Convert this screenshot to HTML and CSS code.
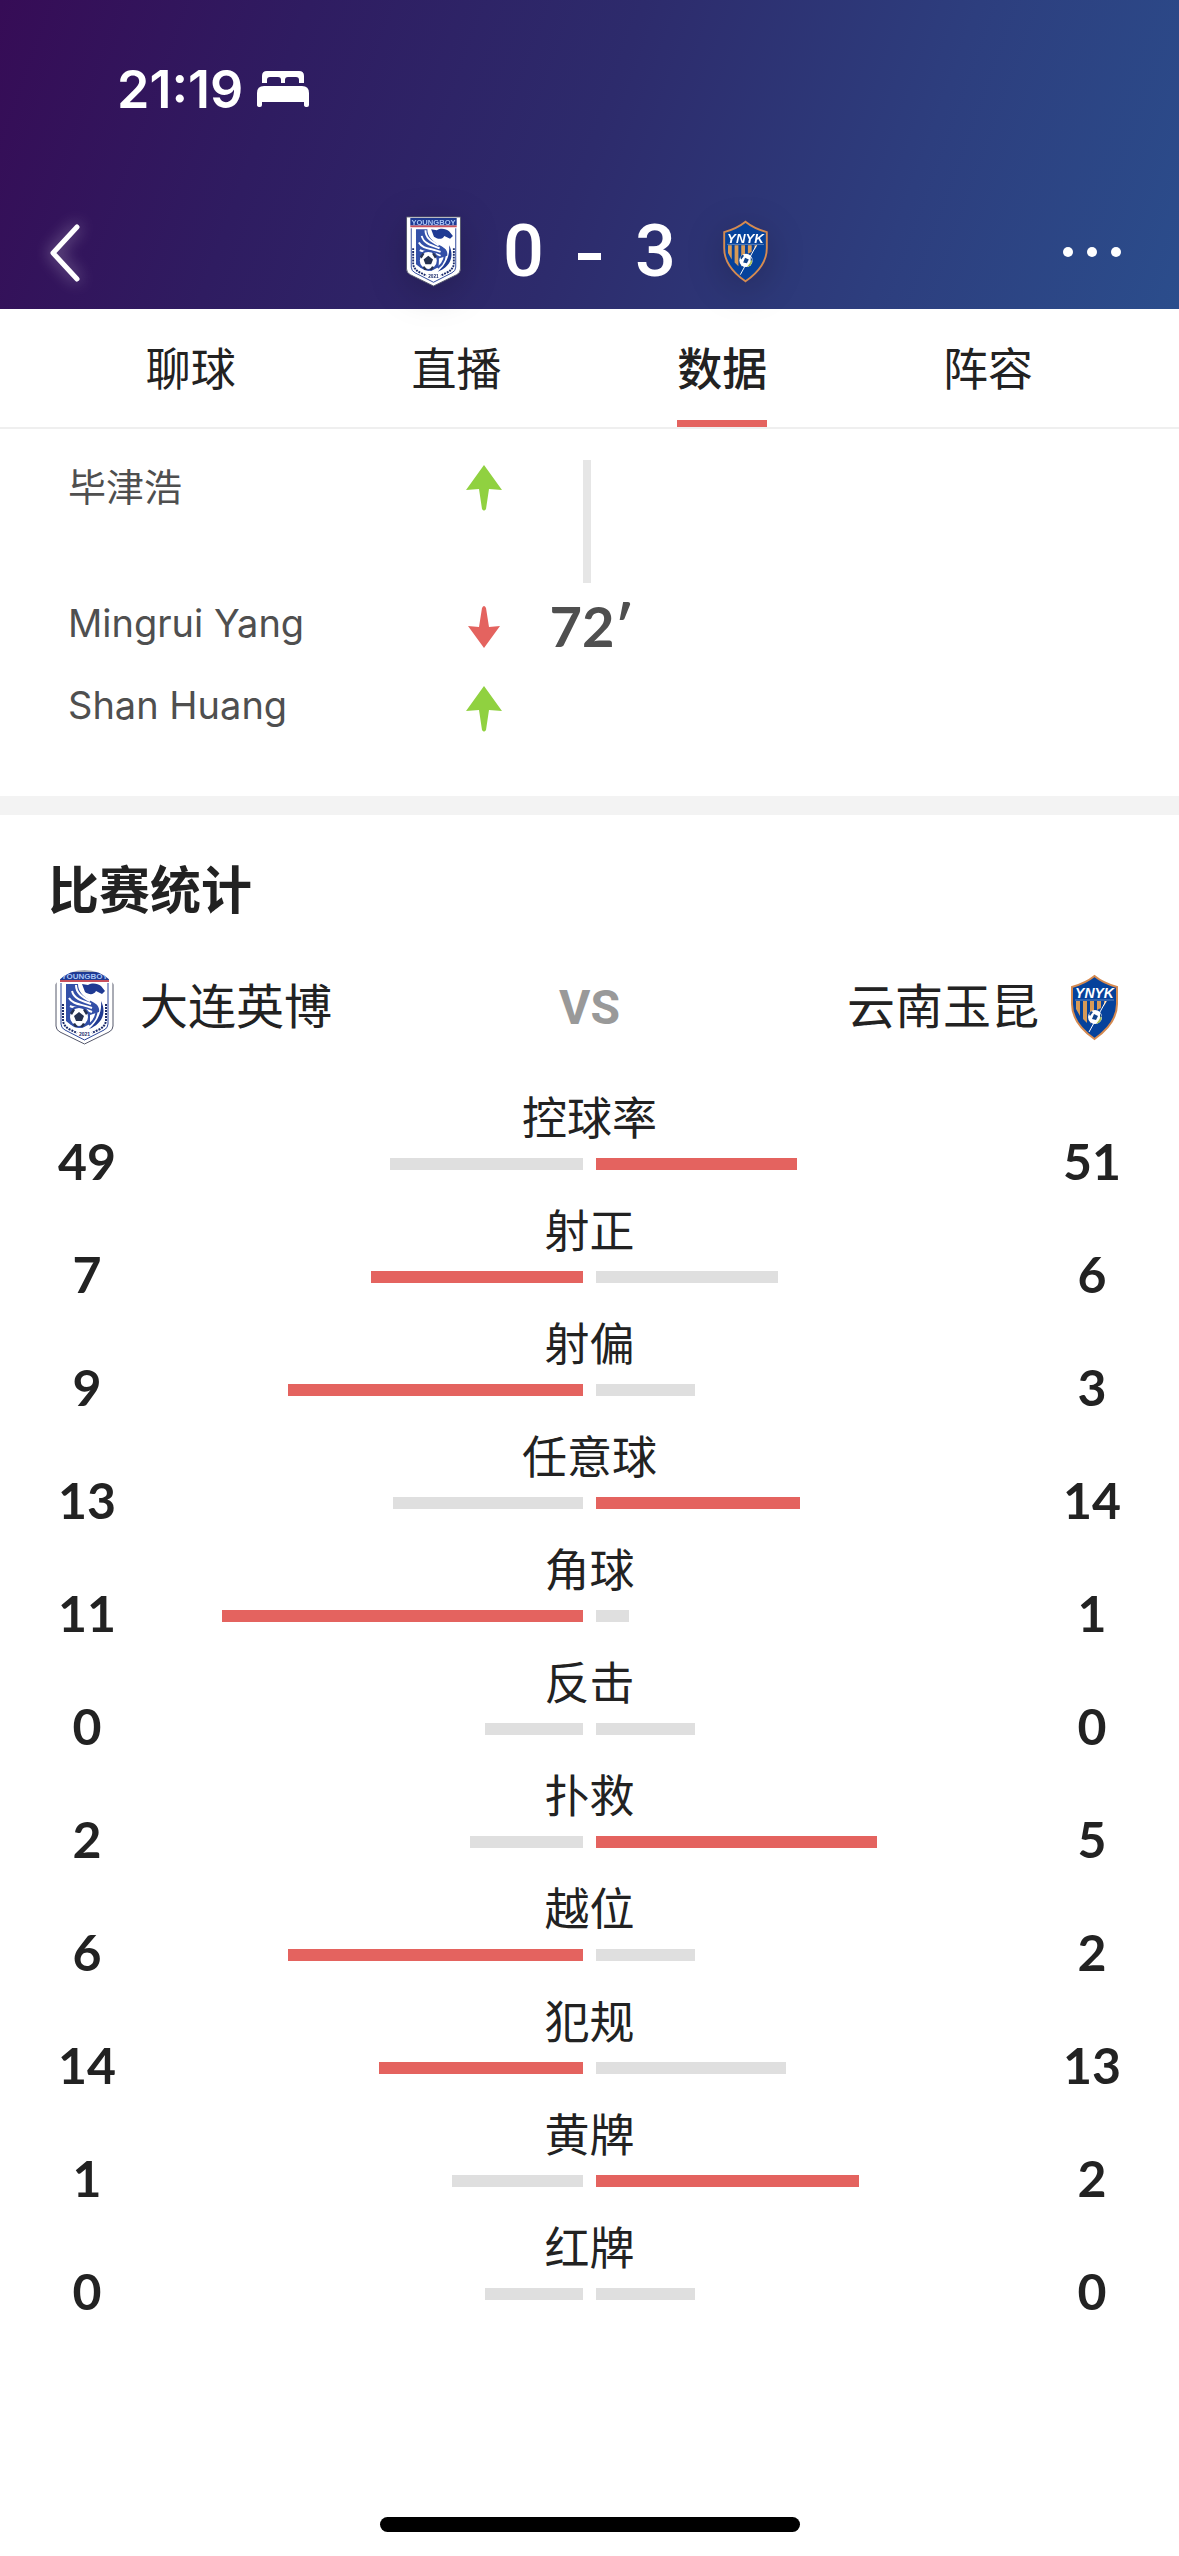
FILE: index.html
```html
<!DOCTYPE html>
<html lang="zh-CN">
<head>
  <meta charset="UTF-8">
  <meta name="viewport" content="width=device-width, initial-scale=1.0">
  <title>大连英博 0 - 3 云南玉昆</title>
  <link rel="stylesheet" href="styles.css">
</head>
<body>
  <!-- escudos e iconos compartidos -->
  <svg class="sprite" aria-hidden="true">
    <symbol id="crest-home" viewBox="0 0 75 75">
      <path d="M9 1H66V56Q66 60 62 62L37.500 74L13 62Q9 60 9 56Z" fill="#fff" stroke="#55586b" stroke-width="1"/>
      <path d="M13 2H62V10H13Z" fill="#1f3a93"/>
      <path d="M13 11H62" stroke="#c8505c" stroke-width="2"/>
      <text x="37.500" y="9" class="crest-home-text">YOUNGBOY</text>
      <path d="M14 13V54Q14 58 18 60L37.500 70L57 60Q61 58 61 54V13" fill="none" stroke="#2a4599" stroke-width="1"/>
      <path d="M19 14H31C31 22 37 27 44 31C50 34 53 37 52 42L43 45L43 54L35 58L24 55L19 51Z" fill="#3350a8"/>
      <path d="M35 14L41 15C46 12 51 14 54 16L58 21L55 24L49 21C47 25 42 25 38 22Z" fill="#1f3a93"/>
      <path d="M29 15C29 23 35 27 43 31M25 21C27 29 35 31 44 34M22 28C26 35 35 34 45 38M23 36C29 39 37 38 45 42" fill="none" stroke="#fff" stroke-width="2"/>
      <path d="M54 31C60 43 55 54 42 59C51 51 55 42 54 31Z" fill="#1f3a93"/>
      <path d="M49 35C51 44 47 51 42 55" fill="none" stroke="#3350a8" stroke-width="2"/>
      <circle cx="32" cy="47" r="10" fill="#fff" stroke="#3350a8" stroke-width="2"/>
      <path d="M32 42L37 46L35 51H29L27 46ZM23 43L26 39L28 40L25 45ZM41 43L38 39L36 40L39 45ZM26 54L28 53L31 57H28ZM38 54L36 53L33 57H36Z" fill="#25314f"/>
      <path d="M16 34V51Q17 57 24 60L30 63M59 34V51Q58 57 51 60L45 63" fill="none" stroke="#1c2c6c" stroke-width="2" stroke-dasharray="2 1"/>
      <text x="37.500" y="66" class="crest-home-year">2021</text>
    </symbol>
    <symbol id="crest-away" viewBox="0 0 75 75">
      <path d="M37.500 6Q46 13 60 17V34C60 50 49 61 37.500 69C26 61 15 50 15 34V17Q29 13 37.500 6Z" fill="#06429b" stroke="#d58a50" stroke-width="2"/>
      <path d="M19 31H23V46L19 39ZM26 31H30V53L26 49ZM33 31H37V43L33 54ZM40 31H44V38L40 40ZM47 31H50L47 36Z" fill="#d79a57"/>
      <path d="M18 30H57" stroke="#5b82bf" stroke-width="1"/>
      <path d="M49 31L32 62" stroke="#fff" stroke-width="1"/>
      <circle cx="38" cy="47" r="7" fill="#fff"/>
      <path d="M37 44L41 46L39 50L35 49ZM32 44L34 41L36 42L33 46ZM43 43L45 47L43 48Z" fill="#12438a"/>
      <path d="M44 46Q46 52 39 54L42 50Z" fill="#a8bf4e"/>
      <text x="37.500" y="28" class="crest-away-text">YNYK</text>
    </symbol>
    <symbol id="arrow-up" viewBox="0 0 36 46">
      <path d="M18 0L36 25L23 24L20 44Q18 47 16 44L13 24L0 25Z" fill="#90d140"/>
    </symbol>
    <symbol id="arrow-down" viewBox="0 0 36 46">
      <path d="M18 44L34 22L23 23L20 4Q18 0 16 4L13 23L2 22Z" fill="#e4635f"/>
    </symbol>
  </svg>

  <header class="header">
    <div class="status-bar">
      <span>21:19</span>
      <svg class="bed" viewBox="0 0 52 36" aria-hidden="true">
        <path d="M5 12V5Q5 0 10 0H42Q47 0 47 5V12H42V9Q42 6 39 6H31Q28 6 28 9V12H24V9Q24 6 21 6H13Q10 6 10 9V12Z" fill="#fff"/>
        <path d="M0 34V22Q0 15 7 15H45Q52 15 52 22V34Q52 36 50 36Q47 36 47 34V31H5V34Q5 36 3 36Q0 36 0 34Z" fill="#fff"/>
      </svg>
    </div>
    <div class="top-bar">
      <button class="icon-btn back" aria-label="返回">
        <svg viewBox="0 0 32 58"><path d="M29 4L5 30L29 56" fill="none" stroke="#fff" stroke-width="5" stroke-linecap="round" stroke-linejoin="round"/></svg>
      </button>
      <div class="score">
        <svg class="crest shadow"><use href="#crest-home"/></svg>
        <div class="score-text"><span>0</span><span class="dash"></span><span>3</span></div>
        <svg class="crest shadow"><use href="#crest-away"/></svg>
      </div>
      <button class="icon-btn more" aria-label="更多">
        <svg viewBox="0 0 58 10"><circle cx="5" cy="5" r="5" fill="#fff"/><circle cx="29" cy="5" r="5" fill="#fff"/><circle cx="53" cy="5" r="5" fill="#fff"/></svg>
      </button>
    </div>
  </header>

  <nav class="tabs">
    <a href="#chat">聊球</a>
    <a href="#live">直播</a>
    <a href="#stats" class="active">数据</a>
    <a href="#lineup">阵容</a>
  </nav>

  <section class="events">
    <div class="event first">
      <div class="players">
        <div class="player"><span>毕津浩</span><svg class="arrow"><use href="#arrow-up"/></svg></div>
      </div>
      <div class="line"></div>
    </div>
    <div class="event">
      <div class="players">
        <div class="player"><span>Mingrui Yang</span><svg class="arrow"><use href="#arrow-down"/></svg></div>
        <div class="player"><span>Shan Huang</span><svg class="arrow"><use href="#arrow-up"/></svg></div>
      </div>
      <div class="minute">72′</div>
    </div>
  </section>

  <main class="stats" id="stats">
    <h1>比赛统计</h1>
    <div class="teams">
      <div class="team"><svg class="crest round"><use href="#crest-home"/></svg><span>大连英博</span></div>
      <span class="vs">VS</span>
      <div class="team away"><span>云南玉昆</span><svg class="crest round"><use href="#crest-away"/></svg></div>
    </div>
    <div class="rows" id="rows"></div>
  </main>

  <div class="home-indicator"></div>

  <script>
    const stats = [
      ['控球率', 49, 51],
      ['射正', 7, 6],
      ['射偏', 9, 3],
      ['任意球', 13, 14],
      ['角球', 11, 1],
      ['反击', 0, 0],
      ['扑救', 2, 5],
      ['越位', 6, 2],
      ['犯规', 14, 13],
      ['黄牌', 1, 2],
      ['红牌', 0, 0]
    ];

    function bar(value, other) {
      const total = value + other;
      // sin datos se muestra un cuarto de la barra
      const width = total ? value / total * 100 : 25;
      return `<div class="side"><div class="bar ${value > other ? 'win' : ''}" style="width: ${width}%"></div></div>`;
    }

    document.getElementById('rows').innerHTML = stats.map(([name, home, away]) => `
      <div class="row">
        <span class="num">${home}</span>
        <div class="middle">
          <span class="name">${name}</span>
          <div class="bars">${bar(home, away)}${bar(away, home)}</div>
        </div>
        <span class="num">${away}</span>
      </div>`).join('');
  </script>
</body>
</html>
```
FILE: styles.css
```css
* {
  box-sizing: border-box;
}
body {
  font-family: Inter, "Noto Sans CJK SC", sans-serif;
  margin: 0;
  background: #fff;
  color: #222;
  min-height: 100vh;
  display: flex;
  flex-direction: column;
}
.sprite {
  display: none;
}
.crest-home-text {
  font: bold 8px "Liberation Sans", sans-serif;
  fill: #a9c5f5;
  text-anchor: middle;
}
.crest-home-year {
  font: bold 5px "Liberation Sans", sans-serif;
  fill: #1c2c6c;
  text-anchor: middle;
}
.crest-away-text {
  font: italic bold 14px "Liberation Sans", sans-serif;
  fill: #fff;
  text-anchor: middle;
}
.header {
  background: linear-gradient(110deg, #360c56 0%, #2f1c61 24%, #2d2b6c 50%, #2d3e7e 76%, #2b4d8c 100%);
  color: #fff;
  padding-top: 56px;
}
.status-bar {
  display: flex;
  align-items: center;
  gap: 14px;
  height: 66px;
  padding-left: 117px;
  font-size: 52px;
  font-weight: 600;
}
.bed {
  width: 52px;
  height: 36px;
}
.top-bar {
  display: grid;
  grid-template-columns: 1fr auto 1fr;
  align-items: center;
  height: 187px;
  padding: 72px 48px 0;
}
.icon-btn {
  background: none;
  border: none;
  padding: 0;
  cursor: pointer;
}
.icon-btn svg {
  display: block;
}
.back {
  justify-self: start;
}
.back svg {
  width: 32px;
  height: 58px;
  overflow: visible;
  filter: drop-shadow(0 0 8px rgba(255,255,255,0.5));
}
.more {
  justify-self: end;
  padding-right: 10px;
}
.more svg {
  width: 58px;
  height: 10px;
}
.score {
  display: flex;
  align-items: center;
  gap: 34px;
}
.score-text {
  display: flex;
  align-items: center;
  gap: 34px;
  font-family: Roboto, sans-serif;
  font-size: 72px;
  font-weight: 500;
  line-height: 72px;
}
.dash {
  width: 23px;
  height: 7px;
  margin-top: 10px;
  background: #fff;
}
.crest {
  width: 71px;
  height: 71px;
  flex: none;
}
.shadow {
  position: relative;
  filter: drop-shadow(0 8px 18px rgba(0,0,0,0.2));
}
.tabs {
  display: grid;
  grid-template-columns: repeat(4, 1fr);
  justify-items: center;
  padding: 0 58px;
  border-bottom: 2px solid #efefef;
}
.tabs a {
  color: #222;
  text-decoration: none;
  padding-top: 10px;
  font-size: 45px;
  line-height: 101px;
  border-bottom: 7px solid transparent;
}
.tabs a.active {
  font-weight: 500;
  border-color: #e4635f;
}
.events {
  padding: 31px 68px 46px;
  color: #4f4f4f;
  border-bottom: 19px solid #f3f3f3;
}
.event {
  display: grid;
  grid-template-columns: 1fr 80px 1fr;
  align-items: start;
}
.event.first {
  height: 126px;
}
.player {
  display: flex;
  justify-content: space-between;
  align-items: center;
  height: 82px;
  padding-right: 48px;
  font-size: 38px;
}
.player span {
  padding-bottom: 8px;
}
.first .player {
  height: 56px;
}
.arrow {
  width: 36px;
  height: 46px;
}
.line {
  width: 8px;
  height: 123px;
  margin-left: 33px;
  background: #e6e6e6;
}
.minute {
  font-family: Lato, sans-serif;
  font-size: 56px;
  font-weight: bold;
  line-height: 80px;
  text-align: center;
}
.stats h1 {
  margin: 0;
  padding: 38px 48px 0;
  font-size: 51px;
  font-weight: bold;
  line-height: 76px;
}
.teams {
  display: grid;
  grid-template-columns: 1fr auto 1fr;
  align-items: center;
  height: 156px;
  padding: 0 47px;
}
.team {
  display: flex;
  align-items: center;
  gap: 18px;
  font-size: 48px;
}
.team span {
  padding-bottom: 8px;
}
.team.away {
  justify-content: flex-end;
}
.round {
  width: 75px;
  height: 75px;
  border-radius: 50%;
}
.vs {
  font-family: Roboto, sans-serif;
  font-size: 48px;
  font-weight: bold;
  color: #999;
}
.row {
  display: grid;
  grid-template-columns: 70px 1fr 70px;
  gap: 67px;
  height: 113px;
  padding: 0 52px;
}
.num {
  padding-top: 44px;
  font-family: Lato, sans-serif;
  font-size: 50px;
  font-weight: bold;
  line-height: 64px;
  text-align: center;
}
.middle {
  text-align: center;
}
.name {
  display: block;
  font-size: 45px;
  line-height: 68px;
}
.bars {
  display: grid;
  grid-template-columns: 1fr 1fr;
  gap: 13px;
  padding-top: 5px;
}
.side:first-child .bar {
  margin-left: auto;
}
.bar {
  height: 12px;
  background: #dfdfdf;
}
.bar.win {
  background: #e4635f;
}
.home-indicator {
  width: 420px;
  height: 15px;
  margin: auto auto 24px;
  border-radius: 8px;
  background: #000;
}
```
